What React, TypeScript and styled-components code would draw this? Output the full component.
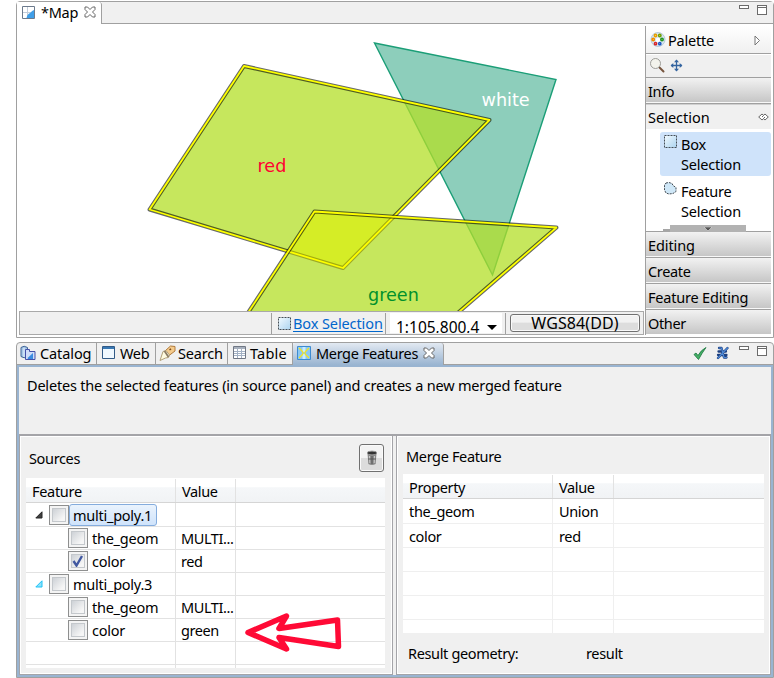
import React from 'react';
import styled, { createGlobalStyle, css } from 'styled-components';

const Global = createGlobalStyle`
  * { box-sizing: border-box; }
  html, body { margin: 0; padding: 0; background: #fff; }
  body {
    width: 774px; height: 678px; overflow: hidden;
    font-family: "Noto Sans", "Open Sans", sans-serif;
    font-size: 14.5px; line-height: 20px; color: #000;
  }
  svg { display: block; flex: none; }
`;

const Label = styled.span<{ $ls?: number }>`
  white-space: nowrap;
  letter-spacing: ${p => p.$ls ?? -0.35}px;
`;

const Window = styled.div`
  width: 774px; height: 678px; padding: 1px 0 0 16px;
  display: flex; flex-direction: column; gap: 4px;
  background: #fff;
`;

/* ---------- map editor ---------- */
const Editor = styled.section`
  height: 337px; display: flex; flex-direction: column;
  border: 1px solid #a0a0a0; border-radius: 4px 4px 0 0; background: #fff;
`;
const EditorTabs = styled.div`
  height: 22px; flex: none; display: flex; background: #fff;
`;
const MapTab = styled.div`
  width: 85px; display: flex; align-items: center; padding: 0 0 2px 5px; gap: 6px;
  border-right: 1px solid #a0a0a0; border-radius: 0 3px 0 0;
`;
const TabFill = styled.div`
  flex: 1; display: flex; justify-content: flex-end; align-items: flex-start;
  gap: 8px; padding: 2px 6px 0 0; background: #f0f0f0; border-bottom: 1px solid #a0a0a0;
`;
const EditorBody = styled.div`
  flex: 1; display: flex; padding: 2px 2px 2px 2px; min-height: 0;
`;
const MapColumn = styled.div`
  width: 625px; display: flex; flex-direction: column;
`;
const MapCanvas = styled.svg`
  width: 625px; height: 285px;
`;
const StatusBar = styled.div`
  height: 24px; flex: none; display: flex; background: #f0f0f0;
  border: 1px solid #a9a9a9; padding: 1px 3px 0 0;
`;
const StatusMessage = styled.div`flex: 1;`;
const ToolStatus = styled.div`
  width: 114px; display: flex; align-items: center; gap: 2px; padding-left: 6px;
  border-left: 1px solid #a0a0a0;
`;
const ToolLink = styled.a`
  color: #0066cc; text-decoration: underline; text-underline-offset: 2px; white-space: nowrap;
  letter-spacing: -0.1px; margin-top: -2px;
`;
const ScaleCell = styled.div`
  width: 120px; padding: 0 0 0 4px; border-left: 1px solid #a0a0a0;
`;
const ScaleBox = styled.div`
  width: 112px; height: 20px; background: #fff; overflow: hidden; font-size: 15.5px;
  display: flex; justify-content: space-between; padding: 4px 5px 0 6px;
  svg { margin-top: 8px; }
`;
const CrsCell = styled.div`
  width: 135px; padding: 1px 0 0 4px; border-left: 1px solid #a0a0a0;
`;
const CrsButton = styled.div`
  width: 130px; height: 18px; border: 1px solid #707070; border-radius: 3px; font-size: 16px;
  box-shadow: inset 0 0 0 1px #fafafa; text-align: center; line-height: 17px;
  background: linear-gradient(#f2f2f2 0 45%, #dddddd 50% 100%);
`;

/* ---------- palette ---------- */
const Palette = styled.aside`
  width: 126px; margin-left: auto; display: flex; flex-direction: column;
  border-left: 1px solid #a0a0a0; background: #fff;
`;
const PaletteHead = styled.div`
  height: 28px; flex: none; display: flex; align-items: center; padding: 1px 10px 0 4px; gap: 2px;
  background: linear-gradient(#fff, #f0f0f0); border-bottom: 1px solid #a0a0a0;
  > :last-child { margin-left: auto; }
`;
const PaletteTools = styled.div`
  height: 24px; flex: none; display: flex; align-items: center; gap: 5px; padding: 0 0 2px 4px;
  background: #f0f0f0; border-bottom: 1px solid #a0a0a0; border-top: 1px solid #fff;
`;
const Drawer = styled.div<{ $last?: boolean }>`
  height: ${p => (p.$last ? 24 : 26)}px; flex: none; padding: 3px 0 0 2px;
  background: linear-gradient(#f2f2f2, #c6c6c6) 0 0 / 100% 24px no-repeat #f8f8f8;
  ${p => !p.$last && css`border-bottom: 1px solid #a0a0a0;`}
`;
const OpenDrawerHead = styled.div`
  height: 25px; flex: none; display: flex; align-items: center; justify-content: space-between;
  padding: 0 2px 0 2px; background: #f0f0f0; border-top: 1px solid #d0d0d0;
`;
const ToolList = styled.div`
  height: 103px; flex: none; display: flex; flex-direction: column; padding: 3px 0 0 14px; gap: 3px;
  border-bottom: 1px solid #a0a0a0;
`;
const ToolItem = styled.div<{ $active?: boolean }>`
  height: 44px; flex: none; display: flex; gap: 4px; padding: 3px 0 0 4px; border-radius: 3px;
  background: ${p => (p.$active ? '#cfe3fa' : 'transparent')};
`;
const ToolText = styled.div`
  width: 70px; line-height: 20px; letter-spacing: -0.2px; margin-top: -1px;
`;
const ScrollStrip = styled.div`
  height: 8px; flex: none; display: flex; align-items: flex-end; margin-left: 3px; margin-top: -2px;
`;
const StripStub = styled.div`width: 7px; height: 3px; background: #a5a5a5;`;
const StripBar = styled.div`
  width: 76px; height: 7px; background: #b2b2b2; display: flex; justify-content: center; align-items: center;
`;

/* ---------- lower views ---------- */
const Views = styled.section`
  height: 336px; display: flex; flex-direction: column;
  border: 1px solid #a0a0a0; border-radius: 4px 4px 0 0; background: #f0f0f0;
`;
const ViewTabs = styled.div`
  height: 22px; flex: none; display: flex; border-bottom: 1px solid #a0a0a0;
`;
const ViewTab = styled.div<{ $w: number; $gap?: number; $pad?: number }>`
  width: ${p => p.$w}px; flex: none; display: flex; align-items: center; gap: ${p => p.$gap ?? 4}px;
  padding: 0 0 2px ${p => p.$pad ?? 4}px; border-right: 1px solid #a0a0a0;
`;
const ActiveTab = styled(ViewTab)`
  height: 22px; padding-bottom: 3px;
  background: linear-gradient(#e2e9f2, #99b4d1); border-radius: 3px 3px 0 0;
`;
const ViewActions = styled.div`
  margin-left: auto; display: flex; gap: 8px; padding: 3px 6px 0 0;
  > :last-child { margin: -1px 0 0 1px; }
`;
const ViewBody = styled.div`
  flex: 1; min-height: 0; display: flex; flex-direction: column;
  border: 2px solid #99b4d1; background: #f0f0f0;
`;
const Description = styled.div`
  height: 69px; flex: none; padding: 8px 0 0 8px; border-bottom: 2px solid #a4a4a8;
`;
const Panels = styled.div`flex: 1; min-height: 0; display: flex; gap: 3px;`;
const Panel = styled.div<{ $w: number }>`
  width: ${p => p.$w}px; border: 1px solid #a4a4a8; border-top: 0; box-shadow: inset 1px 1px 0 #fff, inset -1px -1px 0 #fff;
  display: flex; flex-direction: column;
`;
const SourcesHead = styled.div`
  height: 42px; flex: none; display: flex; justify-content: space-between; padding: 8px 8px 0 9px;
  > span { margin-top: 4px; }
`;
const TrashButton = styled.div`
  width: 25px; height: 28px; border: 1px solid #707070; border-radius: 3px;
  display: flex; align-items: center; justify-content: center;
  background: linear-gradient(#f3f3f3 0 48%, #dcdcdc 52% 100%); box-shadow: inset 0 0 0 1px #fafafa;
`;
const Grid = styled.div<{ $w: number; $h: number; $ml: number }>`
  width: ${p => p.$w}px; height: ${p => p.$h}px; margin-left: ${p => p.$ml}px; flex: none;
  overflow: hidden; background: #fff; display: flex; flex-direction: column;
`;
const Row = styled.div<{ $cols: string; $h: number; $head?: boolean; $line?: string }>`
  display: grid; grid-template-columns: ${p => p.$cols}; height: ${p => p.$h}px; flex: none;
  border-bottom: 1px solid ${p => (p.$head ? '#d5d5d5' : p.$line ?? '#e2e2e2')};
  padding-top: ${p => (p.$head ? 1 : 0)}px;
  background: ${p => (p.$head ? 'linear-gradient(#fff 0 38%, #f5f7f9 40%, #f1f3f5)' : '#fff')};
`;
const Cell = styled.div<{ $pad?: number; $line?: string }>`
  display: flex; align-items: center; min-width: 0; overflow: hidden; padding-left: ${p => p.$pad ?? 6}px;
  border-right: 1px solid ${p => p.$line ?? '#e2e2e2'};
  &:last-child { border-right: 0; }
`;
const CheckBox = styled.div`
  width: 20px; height: 20px; flex: none; border: 1px solid #8e8f8f; background: #f4f4f4; padding: 2px;
  > div {
    width: 14px; height: 14px; border: 1px solid #c4c8cc; background: linear-gradient(135deg, #cdd1d6, #f6f6f6 80%);
  }
`;
const NodeText = styled.span<{ $sel?: boolean }>`
  display: flex; align-items: center; height: 22px; padding: 0 4px 0 3px; white-space: nowrap; letter-spacing: -0.25px;
  border: 1px solid ${p => (p.$sel ? '#84acdd' : 'transparent')};
  border-radius: 3px; background: ${p => (p.$sel ? 'linear-gradient(#eaf3fd, #cfe3fb)' : 'none')};
`;
const Twisty = styled.svg`margin-right: 6px;`;
const MergeHead = styled.div`height: 38px; flex: none; padding: 10px 0 0 9px;`;
const ResultLine = styled.div`
  display: grid; grid-template-columns: 178px 1fr; padding: 10px 0 0 11px;
`;
const ArrowOverlay = styled.svg`
  position: absolute; left: 240px; top: 608px;
`;

const MinMax = () => (
  <svg width="29" height="12" viewBox="0 0 29 12" shapeRendering="crispEdges">
    <rect x="1.5" y="1.5" width="9" height="3" fill="#fff" stroke="#6b6b6b" />
    <rect x="19.5" y="1.5" width="9" height="9" fill="#fff" stroke="#6b6b6b" />
    <path d="M19 3.5h10" stroke="#6b6b6b" />
  </svg>
);
const CloseIcon = () => (
  <svg width="12" height="12" viewBox="0 0 12 12">
    <path d="M1 1h2.500L6 3.500 8.500 1H11v2.500L8.500 6 11 8.500V11H8.500L6 8.500 3.500 11H1V8.500L3.500 6 1 3.500z" fill="#fff" stroke="#666" />
  </svg>
);
const MapIcon = () => (
  <svg width="13" height="13" viewBox="0 0 13 13">
    <path d="M.5.5h12v12H.5z" fill="#fff" stroke="#6c7a8c" />
    <path d="M5.500 1v11M1 6.500h11" stroke="#c3cdda" />
    <path d="M12 4C9 5 9 7 7 7.500 5 9 5 10.500 4.500 12H12z" fill="#3f9ee8" />
  </svg>
);
const PaletteIcon = () => (
  <svg width="16" height="16" viewBox="0 0 16 16">
    <circle cx="8" cy="7.500" r="7" fill="#d7e5f0" stroke="#b7cbd9" />
    <circle cx="8" cy="8" r="2.200" fill="#fff" />
    <g strokeWidth="1.500">
      <circle cx="5.500" cy="3.500" r="1.200" fill="#fff6b0" stroke="#e8a000" /><circle cx="9.800" cy="3.500" r="1.200" fill="#f0ff9a" stroke="#6f9f00" />
      <circle cx="3.200" cy="7.500" r="1.200" fill="#ffe69a" stroke="#f08c00" /><circle cx="12" cy="7.500" r="1.200" fill="#d0f5b4" stroke="#1f9420" />
      <circle cx="5.500" cy="11.700" r="1.100" fill="#fff" stroke="#d8232a" /><circle cx="9.800" cy="11.700" r="1.100" fill="#fff" stroke="#1755c4" />
    </g>
  </svg>
);
const ZoomIcon = () => (
  <svg width="15" height="15" viewBox="0 0 15 15">
    <path d="M9 9l4.500 4.500" stroke="#76543d" strokeWidth="2" strokeLinecap="round" />
    <circle cx="5.500" cy="5.500" r="5" fill="#f3f3ec" stroke="#9c9c98" />
  </svg>
);
const PanIcon = () => (
  <svg width="13" height="13" viewBox="0 0 13 13" fill="none" stroke="#3464a0">
    <path d="M6.500 1v11M1 6.500h11" strokeWidth="1.300" />
    <path d="M4 3.300L6.500.6 9 3.300zM4 9.700l2.500 2.700L9 9.700zM3.300 4L.6 6.500 3.300 9zM9.700 4l2.700 2.500L9.700 9z" fill="#3464a0" stroke="none" />
  </svg>
);
const BoxIcon = () => (
  <svg width="13" height="13" viewBox="0 0 13 13">
    <defs><linearGradient id="bx" x1="0" y1="0" x2="1" y2="1"><stop offset="0" stopColor="#f2faff" /><stop offset="1" stopColor="#acd4f0" /></linearGradient></defs>
    <path d="M.5.5h12v12H.5z" fill="url(#bx)" stroke="#454e56" strokeDasharray="2 1" />
  </svg>
);
const LassoIcon = () => (
  <svg width="13" height="13" viewBox="0 0 13 13">
    <path d="M2 1l3-.5 3 1 1 2 3 2v4l-3 2-4 .5-3-1-1.500-3V3z" fill="#cfe7f7" stroke="#454e56" strokeDasharray="2 1" />
  </svg>
);
const PinIcon = () => (
  <svg width="11" height="8" viewBox="0 0 11 8" fill="#fff" stroke="#666">
    <path d="M.7 4L4 1l1.500 1.300L7 1l3.300 3L7 7 5.500 5.700 4 7zM4 4l1.500-1.500M5.500 5.500L7 4" />
  </svg>
);
const CatalogIcon = () => (
  <svg width="16" height="16" viewBox="0 0 16 16">
    <path d="M1 2.500Q4 0 7.500 2.500v9Q4 14 1 11.500z" fill="#a9c8e8" stroke="#416697" />
    <path d="M4 3v9" stroke="#e8f4ff" />
    <path d="M5.500 4.500h4v2h5.500v8H5.500z" fill="#cfdcf8" stroke="#4450a8" />
    <path d="M7.500 13l5.500-5v6H8z" fill="#3b8be0" />
  </svg>
);
const WebIcon = () => (
  <svg width="13" height="13" viewBox="0 0 13 13">
    <path d="M.5.5h12v12H.5z" fill="#eff8ff" stroke="#315a87" /><path d="M1 1h11v2H1z" fill="#3978b3" />
  </svg>
);
const TorchIcon = () => (
  <svg width="17" height="16" viewBox="0 0 17 16">
    <path d="M6 6l5.500-5 4.500.5V6l-6 4.500z" fill="#f5cb8c" stroke="#b07a3c" />
    <path d="M4 6.500l3-1 3.500 4.500-1 2.500-3 .5L1 15.500 2.500 11z" fill="#fffbe0" stroke="#b0a078" />
    <path d="M5.500 6l4 6" stroke="#8a7a62" strokeWidth="1.800" /><path d="M10.500 5l1.500-1.200" stroke="#7a4a18" strokeWidth="1.500" />
  </svg>
);
const TableIcon = () => (
  <svg width="13" height="13" viewBox="0 0 13 13">
    <path d="M.5.5h12v12H.5z" fill="#fff" stroke="#707784" /><path d="M1 1h11v2H1z" fill="#a7b0bd" />
    <path d="M1 5.500h11M1 7.500h11M1 9.500h11M4.500 3v9M8.500 3v9" stroke="#a3b1c4" />
  </svg>
);
const MergeIcon = () => (
  <svg width="14" height="14" viewBox="0 0 14 14">
    <path d="M.5.5h13v13H.5z" fill="#8cc8f2" stroke="#3d8bd1" />
    <path d="M7 1v5M7 8v5" stroke="#c8ecff" strokeWidth="3" />
    <path d="M2 2l4 4M12 2L8 6M2 12l4-4M12 12L8 8M5 7h4" stroke="#f4e51c" strokeWidth="1.200" />
  </svg>
);
const ApplyIcon = () => (
  <svg width="15" height="15" viewBox="0 0 15 15">
    <path d="M1 8.500l2-1.500 2 2.500Q8 4 13 1.500 9 7 5.500 13.500z" fill="#45b067" stroke="#18733b" strokeWidth=".8" />
  </svg>
);
const CancelIcon = () => (
  <svg width="13" height="14" viewBox="0 0 13 14" fill="none" strokeLinecap="round" strokeLinejoin="round">
    <path d="M3 2h2.500L8 11.500h2.500M11.500 2L2 12M2.500 5.500H10M2 9h8.500" stroke="#1c3f80" strokeWidth="2.300" />
    <path d="M3 2h2.500L8 11.500h2.500M11.500 2L2 12" stroke="#4f8ad6" strokeWidth="1.200" />
  </svg>
);
const TrashIcon = () => (
  <svg width="12" height="16" viewBox="0 0 12 16">
    <path d="M1.500 3h9l-.8 11Q6 16 2.300 14z" fill="#8a8a8a" />
    <ellipse cx="6" cy="3" rx="4.800" ry="1.900" fill="#333" stroke="#999" />
    <path d="M3.500 6l.3 7M8.500 6l-.3 7" stroke="#ccc" /><path d="M6 6v8M2.200 9h7.600" stroke="#555" />
  </svg>
);
const Triangle = ({ open }: { open?: boolean }) => (
  <Twisty width="8" height="8" viewBox="0 0 8 8">
    <path d="M7 .8V7H.8z" fill={open ? '#8fe0fa' : '#404040'} stroke={open ? '#1cc4f7' : '#262626'} />
  </Twisty>
);
const Check = ({ on }: { on?: boolean }) => (
  <CheckBox>
    <div>{on && (
      <svg width="12" height="12" viewBox="0 0 12 12"><path d="M1.500 6l3 4.500L10 1" fill="none" stroke="#4158a0" strokeWidth="2.400" /></svg>
    )}</div>
  </CheckBox>
);

const red = '227,41 472.500,95 326,243 132.500,184.500';
const green = '297.500,186.500 539.500,202.500 398,325 206.500,325';
const white = '357.500,18 539,54.500 475.500,250';

const Selected = ({ points }: { points: string }) => (
  <g strokeLinejoin="round">
    <polygon points={points} fill="#ff0" fillOpacity=".5" />
    <polygon points={points} fill="none" stroke="#000" strokeOpacity=".6" strokeWidth="4" />
    <polygon points={points} fill="none" stroke="#ff0" strokeWidth="1.800" />
  </g>
);

const sources = [
  { name: 'multi_poly.1', root: true, sel: true },
  { name: 'the_geom', value: 'MULTI...' },
  { name: 'color', value: 'red', on: true },
  { name: 'multi_poly.3', root: true, open: true },
  { name: 'the_geom', value: 'MULTI...' },
  { name: 'color', value: 'green' },
] as { name: string; value?: string; root?: boolean; sel?: boolean; on?: boolean; open?: boolean }[];

const merged = [['the_geom', 'Union'], ['color', 'red'], ['', ''], ['', ''], ['', ''], ['', '']];
const srcCols = '150px 60px 1fr';
const mrgCols = '150px 61px 1fr';
const faint = '#efefef';

export default function App() {
  return (
    <>
      <Global />
      <Window>
        <Editor>
          <EditorTabs>
            <MapTab><MapIcon /><Label $ls={-0.3}>*Map</Label><CloseIcon /></MapTab>
            <TabFill><MinMax /></TabFill>
          </EditorTabs>
          <EditorBody>
            <MapColumn>
              <MapCanvas viewBox="2 1 625 285">
                {[white, red, green].map(p => (
                  <polygon key={p} points={p} fill="#1b9e77" fillOpacity=".5" stroke="#1b9e77" strokeWidth="1.400" />
                ))}
                <Selected points={red} />
                <Selected points={green} />
                <g fontFamily="DejaVu Sans, sans-serif" fontSize="17.600">
                  <text x="464.500" y="80.500" fill="#fff">white</text>
                  <text x="240.500" y="147" fill="#ff0033">red</text>
                  <text x="351" y="276" fill="#00912c">green</text>
                </g>
              </MapCanvas>
              <StatusBar>
                <StatusMessage />
                <ToolStatus><BoxIcon /><ToolLink>Box Selection</ToolLink></ToolStatus>
                <ScaleCell>
                  <ScaleBox>
                    <Label $ls={0}>1:105,800,4</Label>
                    <svg width="10" height="5" viewBox="0 0 10 5"><path d="M0 0h10L5 5z" /></svg>
                  </ScaleBox>
                </ScaleCell>
                <CrsCell><CrsButton><Label $ls={0.1}>WGS84(DD)</Label></CrsButton></CrsCell>
              </StatusBar>
            </MapColumn>
            <Palette>
              <PaletteHead>
                <PaletteIcon /><Label $ls={-0.2}>Palette</Label>
                <svg width="7" height="11" viewBox="0 0 7 11"><path d="M1 1v9l4.500-4.500z" fill="#fff" stroke="#777" /></svg>
              </PaletteHead>
              <PaletteTools><ZoomIcon /><PanIcon /></PaletteTools>
              <Drawer><Label>Info</Label></Drawer>
              <OpenDrawerHead><Label $ls={0}>Selection</Label><PinIcon /></OpenDrawerHead>
              <ToolList>
                <ToolItem $active><BoxIcon /><ToolText>Box Selection</ToolText></ToolItem>
                <ToolItem><LassoIcon /><ToolText>Feature Selection</ToolText></ToolItem>
                <ScrollStrip>
                  <StripStub />
                  <StripBar><svg width="8" height="4" viewBox="0 0 8 4"><path d="M0 0h8L4 4z" fill="#555" stroke="#eee" strokeWidth=".5" /></svg></StripBar>
                </ScrollStrip>
              </ToolList>
              <Drawer><Label $ls={-0.1}>Editing</Label></Drawer>
              <Drawer><Label>Create</Label></Drawer>
              <Drawer><Label $ls={-0.2}>Feature Editing</Label></Drawer>
              <Drawer $last><Label>Other</Label></Drawer>
            </Palette>
          </EditorBody>
        </Editor>

        <Views>
          <ViewTabs>
            <ViewTab $w={80} $pad={3}><CatalogIcon /><Label $ls={-0.1}>Catalog</Label></ViewTab>
            <ViewTab $w={59} $pad={5} $gap={5}><WebIcon /><Label>Web</Label></ViewTab>
            <ViewTab $w={72} $pad={3} $gap={2}><TorchIcon /><Label $ls={-0.2}>Search</Label></ViewTab>
            <ViewTab $w={65} $pad={5}><TableIcon /><Label $ls={0.2}>Table</Label></ViewTab>
            <ActiveTab $w={151} $pad={4} $gap={5}><MergeIcon /><Label>Merge Features</Label><CloseIcon /></ActiveTab>
            <ViewActions><ApplyIcon /><CancelIcon /><MinMax /></ViewActions>
          </ViewTabs>
          <ViewBody>
            <Description><Label $ls={-0.2}>Deletes the selected features (in source panel) and creates a new merged feature</Label></Description>
            <Panels>
              <Panel $w={374}>
                <SourcesHead><Label>Sources</Label><TrashButton><TrashIcon /></TrashButton></SourcesHead>
                <Grid $w={359} $h={190} $ml={6}>
                  <Row $cols={srcCols} $h={25} $head>
                    <Cell><Label $ls={-0.3}>Feature</Label></Cell><Cell><Label>Value</Label></Cell><Cell />
                  </Row>
                  {sources.map((s, i) => (
                    <Row key={i} $cols={srcCols} $h={i === 0 ? 24 : 23}>
                      <Cell $pad={s.root ? 9 : 42}>
                        {s.root && <Triangle open={s.open} />}
                        <Check on={s.on} /><NodeText $sel={s.sel}>{s.name}</NodeText>
                      </Cell>
                      <Cell $pad={5}><Label $ls={-0.4}>{s.value}</Label></Cell><Cell />
                    </Row>
                  ))}
                  <Row $cols={srcCols} $h={23}><Cell /><Cell /><Cell /></Row>
                  <Row $cols={srcCols} $h={23}><Cell /><Cell /><Cell /></Row>
                </Grid>
              </Panel>
              <Panel $w={375}>
                <MergeHead><Label>Merge Feature</Label></MergeHead>
                <Grid $w={361} $h={159} $ml={6}>
                  <Row $cols={mrgCols} $h={25} $head>
                    <Cell><Label>Property</Label></Cell><Cell><Label>Value</Label></Cell><Cell />
                  </Row>
                  {merged.map(([k, v], i) => (
                    <Row key={i} $cols={mrgCols} $h={i === 0 ? 25 : 24} $line={faint}>
                      <Cell $line={faint}><Label>{k}</Label></Cell><Cell $line={faint}><Label>{v}</Label></Cell><Cell />
                    </Row>
                  ))}
                </Grid>
                <ResultLine><Label>Result geometry:</Label><Label>result</Label></ResultLine>
              </Panel>
            </Panels>
          </ViewBody>
        </Views>
      </Window>
      <ArrowOverlay width="108" height="50" viewBox="240 608 108 50">
        <path d="M248 632.500L286.500 616 279 628.500 337.500 620l1 26.500L279 637.500 286.500 649z" fill="none" stroke="#ff0a36" strokeWidth="5.500" strokeLinejoin="round" />
      </ArrowOverlay>
    </>
  );
}
